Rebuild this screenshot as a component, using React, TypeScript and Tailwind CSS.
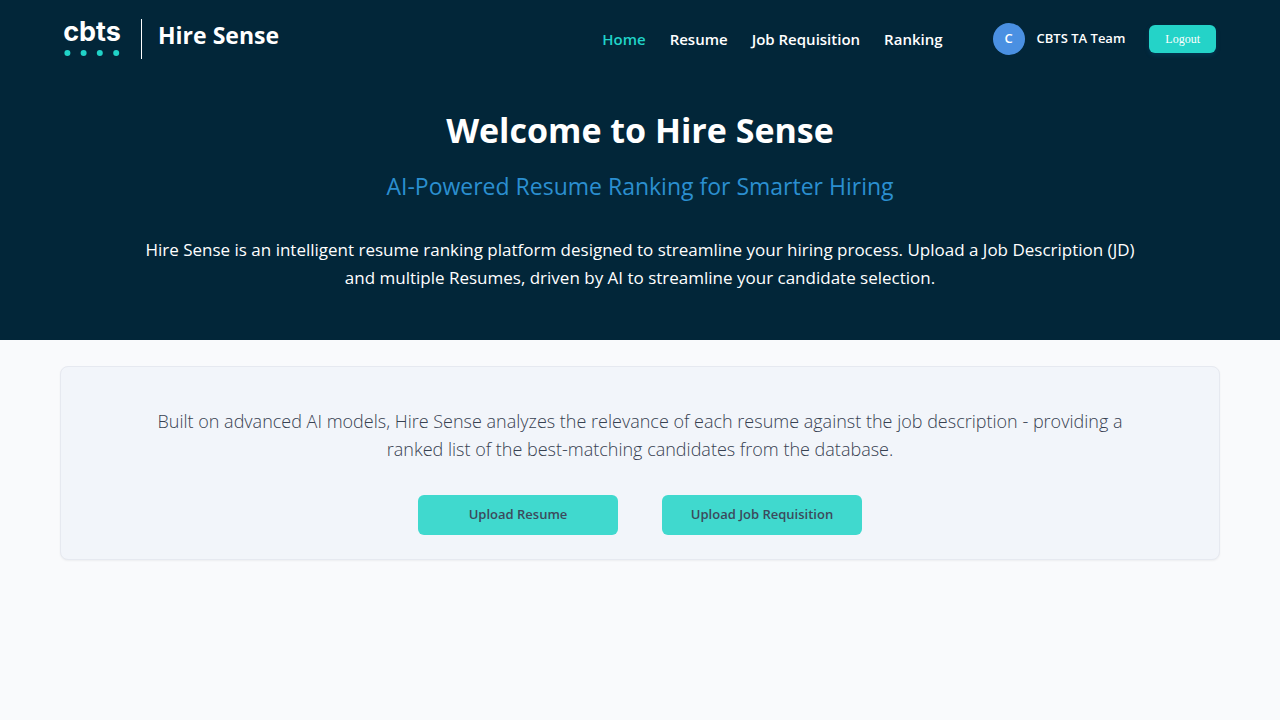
const navItems = ["Home", "Resume", "Job Requisition", "Ranking"];

function Logo() {
  return (
    <div className="flex w-14 flex-col items-center gap-1 pb-1" aria-label="cbts">
      <span className="font-['Inter',sans-serif] text-[27px] font-bold leading-[28px] text-white">cbts</span>
      <svg viewBox="0 0 56 6" className="h-1.5 w-14 fill-[#20d3c8]" aria-hidden="true">
        <circle cx="3.4" cy="3" r="3" />
        <circle cx="19.6" cy="3" r="3" />
        <circle cx="35.8" cy="3" r="3" />
        <circle cx="52.2" cy="3" r="3" />
      </svg>
    </div>
  );
}

function Header() {
  return (
    <header className="flex h-[78px] items-center justify-between px-16">
      <div className="flex items-center">
        <Logo />
        <div className="ml-[21px] h-10 w-px bg-white" />
        <span className="ml-4 pb-2 text-[23px] font-bold leading-8">Hire Sense</span>
      </div>
      <div className="flex items-center">
        <nav className="flex gap-6 text-[15px] font-semibold">
          {navItems.map((item) => (
            <a key={item} href="#" className={item === "Home" ? "text-[#20d3c8]" : "text-white"}>
              {item}
            </a>
          ))}
        </nav>
        <div className="ml-[50px] flex items-center gap-3 text-[13px] font-semibold">
          <span className="flex size-8 items-center justify-center rounded-full bg-[#4a90e2]">C</span>
          <span>CBTS TA Team</span>
        </div>
        <button
          type="button"
          className="ml-6 h-7 rounded-md bg-[#24d3c8] px-4 font-['Liberation_Serif',serif] text-xs text-white shadow-[0_2px_4px_rgba(0,80,120,0.4)]"
        >
          Logout
        </button>
      </div>
    </header>
  );
}

export default function App() {
  return (
    <div className="min-h-screen bg-[#f9fafc] font-['Open_Sans','Noto_Sans',sans-serif]">
      <div className="bg-[#022639] text-white">
        <Header />
        <section className="px-16 pt-7 pb-12 text-center">
          <h1 className="text-[34px] font-bold leading-12">Welcome to Hire Sense</h1>
          <p className="mt-4 text-[23px] leading-8 text-[#2b8fd0]">AI-Powered Resume Ranking for Smarter Hiring</p>
          <p className="mx-auto mt-[34px] max-w-[1000px] text-[17px] leading-7">
            Hire Sense is an intelligent resume ranking platform designed to streamline your hiring process. Upload a
            Job Description (JD) and multiple Resumes, driven by AI to streamline your candidate selection.
          </p>
        </section>
      </div>
      <main className="px-[60px] pt-[26px]">
        <section className="rounded-lg border border-[#e6e9f0] bg-[#f2f5fa] px-10 pt-10 pb-6 text-center shadow-xs">
          <p className="mx-auto max-w-[1000px] text-[18px] font-light leading-7 text-[#374151]">
            Built on advanced AI models, Hire Sense analyzes the relevance of each resume against the job description -
            providing a ranked list of the best-matching candidates from the database.
          </p>
          <div className="mt-8 flex justify-center gap-11 text-[13px] font-semibold text-[#3c4a5c]">
            <button type="button" className="h-10 w-[200px] rounded-md bg-[#40d9ce]">
              Upload Resume
            </button>
            <button type="button" className="h-10 w-[200px] rounded-md bg-[#40d9ce]">
              Upload Job Requisition
            </button>
          </div>
        </section>
      </main>
    </div>
  );
}
